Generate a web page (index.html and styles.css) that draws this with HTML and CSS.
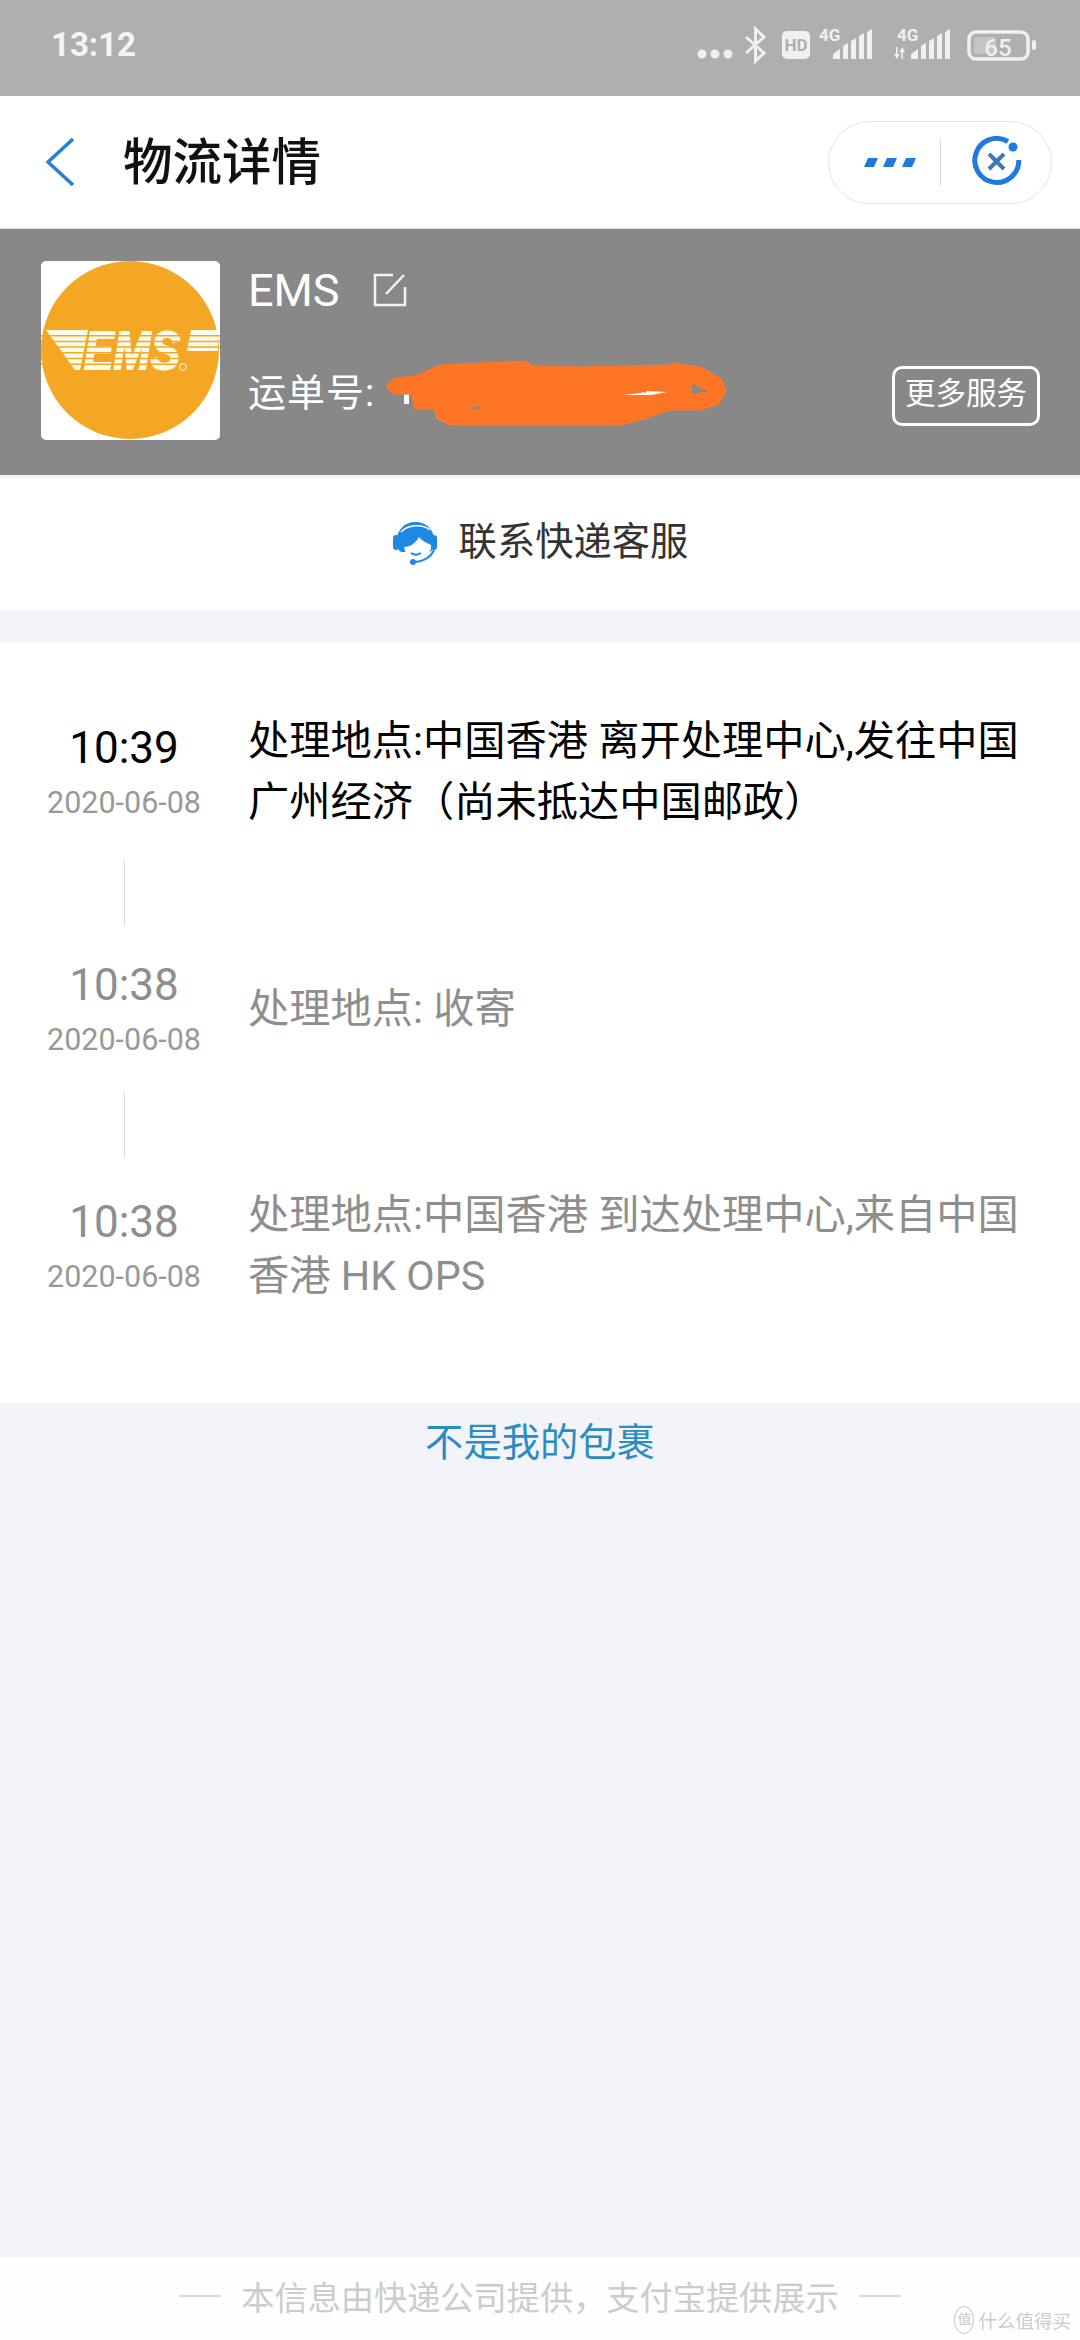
FILE: index.html
```html
<!DOCTYPE html>
<html lang="zh-CN">

<head>
    <meta charset="UTF-8">
    <title>物流详情</title>
    <link rel="stylesheet" href="styles.css">
</head>

<body>
    <div class="page">
        <div class="statusbar">
            <span class="clock">13:12</span>
            <svg class="status-icons" width="350" height="40" viewBox="690 25 350 40">
                <g fill="#f0f0f0">
                    <circle cx="702" cy="54" r="4.5"/>
                    <circle cx="715" cy="54" r="4.5"/>
                    <circle cx="728" cy="54" r="4.5"/>
                    <rect x="782" y="31" width="28" height="28" rx="5"/>
                    <text x="796" y="51" class="hd-text" text-anchor="middle">HD</text>
                    <text x="819" y="41" class="net-text">4G</text>
                    <path d="M833 59v-5l7-5v10zM843 59V46l5-3v16zM851 59V41l5-3v21zM859 59V36l5-3v26zM867 59V32l5-3v30z"/>
                    <text x="897" y="41" class="net-text">4G</text>
                    <path d="M911 59v-5l7-5v10zM921 59V46l5-3v16zM929 59V41l5-3v21zM937 59V36l5-3v26zM945 59V32l5-3v30z"/>
                    <path d="M896 47h1.6v7h2l-2.8 5-2.800-5h2zM903 59h-1.600v-7h-2l2.800-5 2.800 5h-2z"/>
                    <rect x="1032" y="40" width="4" height="10" rx="2"/>
                </g>
                <path d="M746 37l18 16-8.500 8V29l8.500 8-18 16" fill="none" stroke="#f0f0f0" stroke-width="3"/>
                <rect x="969" y="32" width="59" height="27" rx="7" fill="none" stroke="#f0f0f0" stroke-width="3.500"/>
                <rect x="974" y="37" width="22" height="17" rx="2" fill="#c4c4c4"/>
                <text x="998" y="56" class="batt-text" text-anchor="middle">65</text>
            </svg>
        </div>

        <div class="navbar">
            <svg class="back" width="28" height="48" viewBox="0 0 28 48">
                <path d="M27 1L2 24l25 23" fill="none" stroke="#2a7ed9" stroke-width="3.500"/>
            </svg>
            <div class="nav-title">物流详情</div>
            <div class="capsule">
                <div class="capsule-cell">
                    <svg class="more-dots" width="52" height="9" viewBox="0 0 52 9">
                        <path d="M4 0h10l-4 9H0zM23 0h10l-4 9H19zM42 0h10l-4 9H38z" fill="#1f7ae0"/>
                    </svg>
                </div>
                <div class="capsule-line"></div>
                <div class="capsule-cell">
                    <svg class="close-ring" width="56" height="56" viewBox="0 0 56 56">
                        <path d="M39 7.500A22 22 0 1 0 49.800 26" fill="none" stroke="#1f7ae0" stroke-width="5"/>
                        <circle cx="44" cy="13" r="4.500" fill="#1f7ae0"/>
                        <path d="M20 20l15 15M35 20L20 35" stroke="#3b78b8" stroke-width="4"/>
                    </svg>
                </div>
            </div>
        </div>

        <div class="express">
            <svg class="logo" width="179" height="179" viewBox="0 0 179 179">
                <rect width="179" height="179" rx="5" fill="#fff"/>
                <circle cx="89" cy="89" r="89" fill="#f4a725"/>
                <path d="M5 69h42l-8 40h-5z" fill="#fffbe8"/>
                <path d="M150 69h27v21h-31z" fill="#fffbe8"/>
                <text x="43" y="108" class="logo-text" textLength="96" lengthAdjust="spacingAndGlyphs">EMS</text>
                <g stroke="#f4a725" stroke-width="1.500">
                    <path d="M0 74.700h180M0 80.400h180M0 86h180M0 91.800h146M0 97.500h146M0 103.200h146"/>
                </g>
                <circle cx="142" cy="106" r="3.500" fill="none" stroke="#fffbe8" stroke-width="1"/>
            </svg>
            <div class="express-info">
                <div class="express-name">
                    <span>EMS</span>
                    <svg width="34" height="34" viewBox="0 0 34 34">
                        <path d="M20 2H2v30h30V14" fill="none" stroke="#f2f2f2" stroke-width="2.500"/>
                        <path d="M13 21L31 2" fill="none" stroke="#f2f2f2" stroke-width="2.500"/>
                    </svg>
                </div>
                <div class="express-no">运单号:</div>
            </div>
            <div class="more-btn">更多服务</div>
            <!-- 遮住单号的涂抹 -->
            <svg class="scribble" width="360" height="100" viewBox="0 0 360 100">
                <path d="M24 53h5v10h-5z" fill="#fff"/>
                <path d="M8 45l7-7 20-2 25-11 40-2 45-2 7 5 48 1 90-2 5-2 10 2 15 2 20 11 5 12-7 12-18 6h-30l-30 10-20 5H70l-12-6-3-10H35l-2-15H15l-7-5z" fill="#ff7526" stroke="#ff7526" stroke-width="3" stroke-linejoin="round"/>
                <path d="M312 43l16 7-16 3z" fill="#888"/>
                <path d="M243 54l18-2 2-1 2 1 2-2 20 1-16 3z" fill="#fff"/>
                <path d="M90 68l10-3v3z" fill="#888"/>
            </svg>
        </div>

        <div class="contact">
            <svg width="46" height="46" viewBox="0 0 46 46">
                <path d="M5 24C3 9 13 1 23.500 1S44 9 42 24c-1 5-3 7-5 7H10c-3 0-4-3-5-7z" fill="#1e88e5"/>
                <path d="M12 26c6 0 12-4 15-10 3 4 8 6 12 8 1 8-7 14-15 14-7 0-11-6-12-12z" fill="#fff"/>
                <path d="M9 11C15 4 30 2 38 9" fill="none" stroke="#fff" stroke-width="1.500"/>
                <rect x="1" y="14" width="6" height="15" rx="3" fill="#1e88e5"/>
                <rect x="39" y="14" width="6" height="15" rx="3" fill="#1e88e5"/>
                <path d="M19 32c3 2 7 2 10 0" fill="none" stroke="#1e88e5" stroke-width="2"/>
                <path d="M42 29c-3 7-11 12-21 12" fill="none" stroke="#1e88e5" stroke-width="2"/>
                <circle cx="21" cy="41" r="3" fill="#1e88e5"/>
            </svg>
            <span>联系快递客服</span>
        </div>

        <div class="timeline">
            <div class="trace trace-now">
                <div class="trace-when">
                    <div class="trace-time">10:39</div>
                    <div class="trace-date">2020-06-08</div>
                </div>
                <div class="trace-text">处理地点:中国香港 离开处理中心,发往中国广州经济（尚未抵达中国邮政）</div>
            </div>
            <div class="trace-line"></div>
            <div class="trace">
                <div class="trace-when">
                    <div class="trace-time">10:38</div>
                    <div class="trace-date">2020-06-08</div>
                </div>
                <div class="trace-text">处理地点: 收寄</div>
            </div>
            <div class="trace-line"></div>
            <div class="trace">
                <div class="trace-when">
                    <div class="trace-time">10:38</div>
                    <div class="trace-date">2020-06-08</div>
                </div>
                <div class="trace-text">处理地点:中国香港 到达处理中心,来自中国香港 HK OPS</div>
            </div>
        </div>

        <div class="not-mine">不是我的包裹</div>

        <div class="footer">
            <i class="footer-dash"></i>
            <span>本信息由快递公司提供，支付宝提供展示</span>
            <i class="footer-dash"></i>
        </div>
        <div class="watermark"><b>值</b>什么值得买</div>
    </div>
</body>

</html>
```

FILE: styles.css
```css
* {
    box-sizing: border-box;
}

body {
    margin: 0;
    background: #f3f4f9;
    font-family: Roboto, "Noto Sans CJK SC", sans-serif;
}

.page {
    position: relative;
    display: flex;
    flex-direction: column;
    height: 2340px;
    overflow: hidden;
}

/* 状态栏 */
.statusbar {
    display: flex;
    justify-content: space-between;
    align-items: flex-start;
    height: 96px;
    padding: 25px 40px 0 51px;
    background: #afafaf;
}

.clock {
    font-size: 33px;
    line-height: 40px;
    font-weight: 700;
    color: #f4f4f4;
}

.hd-text {
    font: 700 17px Roboto, sans-serif;
    fill: #afafaf;
}

.net-text {
    font: 700 17px Roboto, sans-serif;
}

.batt-text {
    font: 500 24px Roboto, sans-serif;
    fill: #f0f0f0;
}

/* 标题栏 */
.navbar {
    display: flex;
    align-items: center;
    height: 133px;
    padding: 0 28px 0 46px;
    background: #fff;
    border-bottom: 1px solid #ddd;
}

.nav-title {
    margin-left: 49px;
    padding-bottom: 8px;
    font-size: 49.500px;
    font-weight: 500;
    color: #111;
}

.capsule {
    display: flex;
    align-items: center;
    width: 224px;
    height: 83px;
    margin-left: auto;
    border: 1.500px solid #e4e4e4;
    border-radius: 42px;
}

.capsule-cell {
    flex: 1;
    display: flex;
    justify-content: center;
    align-items: center;
}

.more-dots {
    margin: 0 0 0 12px;
}

.close-ring {
    margin-left: 2px;
}

.capsule-line {
    width: 1px;
    height: 47px;
    background: #d8d8d8;
}

/* 快递信息 */
.express {
    position: relative;
    display: flex;
    align-items: flex-start;
    height: 246px;
    padding: 32px 40px 0 41px;
    background: #888;
    color: #fff;
}

.logo {
    flex: none;
}

.logo-text {
    font: italic 700 54px "Liberation Sans", sans-serif;
    fill: #fffbe8;
    stroke: #fffbe8;
    stroke-width: 2px;
}

.express-info {
    margin-left: 28px;
}

.express-name {
    display: flex;
    align-items: center;
    gap: 33px;
    height: 52px;
    margin-top: 3px;
    font-size: 45px;
}

.express-no {
    margin-top: 50px;
    font-size: 38px;
    line-height: 54px;
    letter-spacing: 1px;
}

.more-btn {
    width: 148px;
    height: 60px;
    margin: 105px 0 0 auto;
    border: 3px solid #fff;
    border-radius: 10px;
    font-size: 30.500px;
    line-height: 50px;
    text-align: center;
}

.scribble {
    position: absolute;
    left: 380px;
    top: 112px;
}

/* 联系客服 */
.contact {
    display: flex;
    justify-content: center;
    align-items: center;
    gap: 21px;
    height: 135px;
    border-top: 3px solid #f1f1f1;
    background: #fff;
    font-size: 38.300px;
    color: #333;
}

.contact span {
    padding-bottom: 11px;
}

/* 物流节点 */
.timeline {
    margin-top: 33px;
    padding: 68px 0 96px;
    background: #fff;
}

.trace {
    display: flex;
    align-items: center;
    min-height: 112px;
    color: #8e8e8e;
}

.trace-when {
    flex: none;
    width: 248px;
    margin: 3px 0 -3px;
    text-align: center;
}

.trace-time {
    font-size: 44px;
    line-height: 56px;
}

.trace-date {
    font-size: 30.500px;
    line-height: 54px;
    color: #999;
}

.trace-text {
    width: 800px;
    font-size: 41.250px;
    line-height: 61px;
}

.trace-now {
    color: #000;
}

.trace-line {
    width: 1px;
    height: 66px;
    margin: 27px 0 27px 124px;
    background: #ddd;
}

.not-mine {
    margin-top: 17px;
    font-size: 38.300px;
    line-height: 46px;
    text-align: center;
    color: #2b8cc4;
}

/* 底部 */
.footer {
    display: flex;
    justify-content: center;
    align-items: center;
    gap: 20px;
    height: 83px;
    margin-top: auto;
    padding-bottom: 6px;
    background: #fefefe;
    font-size: 33.200px;
    color: #ccc;
}

.footer-dash {
    width: 42px;
    height: 2px;
    background: #d8d8d8;
}

.watermark {
    position: absolute;
    right: 9px;
    bottom: 6px;
    display: flex;
    align-items: center;
    gap: 4px;
    font-size: 18.500px;
    color: #ccc;
}

.watermark b {
    width: 20px;
    height: 28px;
    border: 1px solid #ccc;
    border-radius: 50%;
    font-size: 14px;
    font-weight: 400;
    line-height: 24px;
    text-align: center;
}
```
